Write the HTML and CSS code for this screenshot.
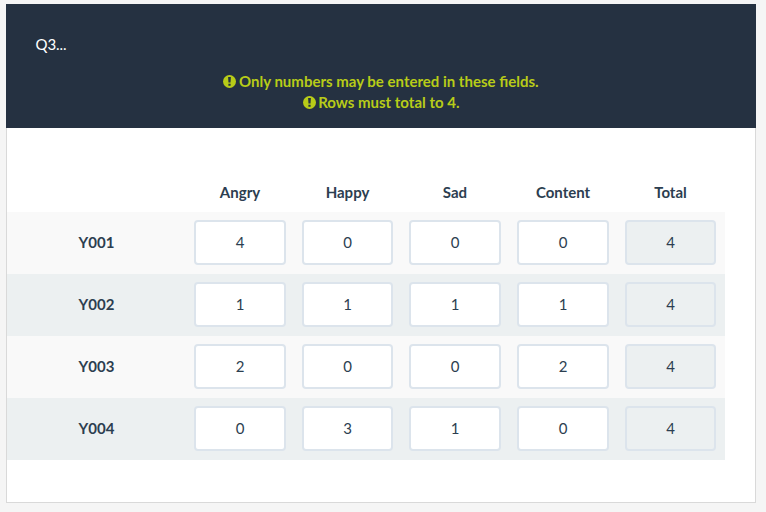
FILE: index.html
```html
<!DOCTYPE html>
<html lang="en">
<head>
<title>Survey</title>
<meta charset="UTF-8">
<meta name="viewport" content="width=device-width, initial-scale=1.0">
<link rel="stylesheet" href="styles.css">
</head>
<body>
<div class="question">
    <div class="question-header">
        <div class="question-text">Q3...</div>
        <div class="tips">
            <div class="tip"><svg class="icon" viewBox="0 0 14 14"><circle cx="7" cy="7" r="7"/><path d="M5.5 2.2h3l-.4 6H5.9zM5.8 9.3h2.4v2.3H5.8z"/></svg> Only numbers may be entered in these fields.</div>
            <div class="tip"><svg class="icon" viewBox="0 0 14 14"><circle cx="7" cy="7" r="7"/><path d="M5.5 2.2h3l-.4 6H5.9zM5.8 9.3h2.4v2.3H5.8z"/></svg> Rows must total to 4.</div>
        </div>
    </div>
    <div class="answers">
        <table>
            <colgroup>
                <col class="col-label"><col class="col"><col class="col-narrow"><col class="col"><col class="col"><col class="col">
            </colgroup>
            <thead>
                <tr><th></th><th>Angry</th><th>Happy</th><th>Sad</th><th>Content</th><th>Total</th></tr>
            </thead>
            <tbody>
                <tr>
                    <th>Y001</th>
                    <td><input type="text" value="4"></td>
                    <td><input type="text" value="0"></td>
                    <td><input type="text" value="0"></td>
                    <td><input type="text" value="0"></td>
                    <td><input type="text" value="4" disabled></td>
                </tr>
                <tr>
                    <th>Y002</th>
                    <td><input type="text" value="1"></td>
                    <td><input type="text" value="1"></td>
                    <td><input type="text" value="1"></td>
                    <td><input type="text" value="1"></td>
                    <td><input type="text" value="4" disabled></td>
                </tr>
                <tr>
                    <th>Y003</th>
                    <td><input type="text" value="2"></td>
                    <td><input type="text" value="0"></td>
                    <td><input type="text" value="0"></td>
                    <td><input type="text" value="2"></td>
                    <td><input type="text" value="4" disabled></td>
                </tr>
                <tr>
                    <th>Y004</th>
                    <td><input type="text" value="0"></td>
                    <td><input type="text" value="3"></td>
                    <td><input type="text" value="1"></td>
                    <td><input type="text" value="0"></td>
                    <td><input type="text" value="4" disabled></td>
                </tr>
            </tbody>
        </table>
    </div>
</div>
</body>
</html>
```
FILE: styles.css
```css
* {
    box-sizing: border-box;
}

body {
    margin: 0;
    padding: 4px 10px 9px 6px;
    height: 512px;
    background-color: #f5f5f5;
    color: #2c3e50;
    font-family: Lato, sans-serif;
    font-size: 15px;
    line-height: 21px;
}

.question {
    height: 499px;
    background-color: #fff;
    border: 1px solid #d9d9d9;
    border-top: none;
}

.question-header {
    height: 124px;
    margin: 0 -1px;
    padding: 30px 29.5px;
    background-color: #253141;
    color: #fff;
}

.question-text {
    letter-spacing: -0.1px;
}

.tips {
    margin-top: 16px;
    color: #b8cc18;
    font-weight: 700;
    text-align: center;
}

.icon {
    width: 13px;
    height: 13px;
    margin-right: -1px;
    vertical-align: -1px;
    fill: #b8cc18;
}

.icon path {
    fill: #253141;
}

.answers {
    padding: 45px 30px 0 0;
}

table {
    width: 718px;
    table-layout: fixed;
    border-collapse: collapse;
}

.col-label {
    width: 179px;
}

.col {
    width: 108px;
}

.col-narrow {
    width: 107px;
}

th,
td {
    padding: 8px 8px 9px;
    font-weight: 700;
    text-align: center;
}

th:last-child,
td:last-child {
    padding-right: 9px;
}

thead th {
    height: 39px;
    padding-bottom: 8px;
}

tbody tr {
    height: 62px;
    background-color: #f9f9f9;
}

tbody tr:nth-child(even) {
    background-color: #ecf0f1;
}

input {
    display: block;
    width: 100%;
    height: 45px;
    padding: 0 0 2px;
    border: 2px solid #dce4ec;
    border-radius: 4px;
    background-color: #fff;
    color: #2c3e50;
    font-family: inherit;
    font-size: 15px;
    text-align: center;
}

input:disabled {
    background-color: #ecf0f1;
}
```
